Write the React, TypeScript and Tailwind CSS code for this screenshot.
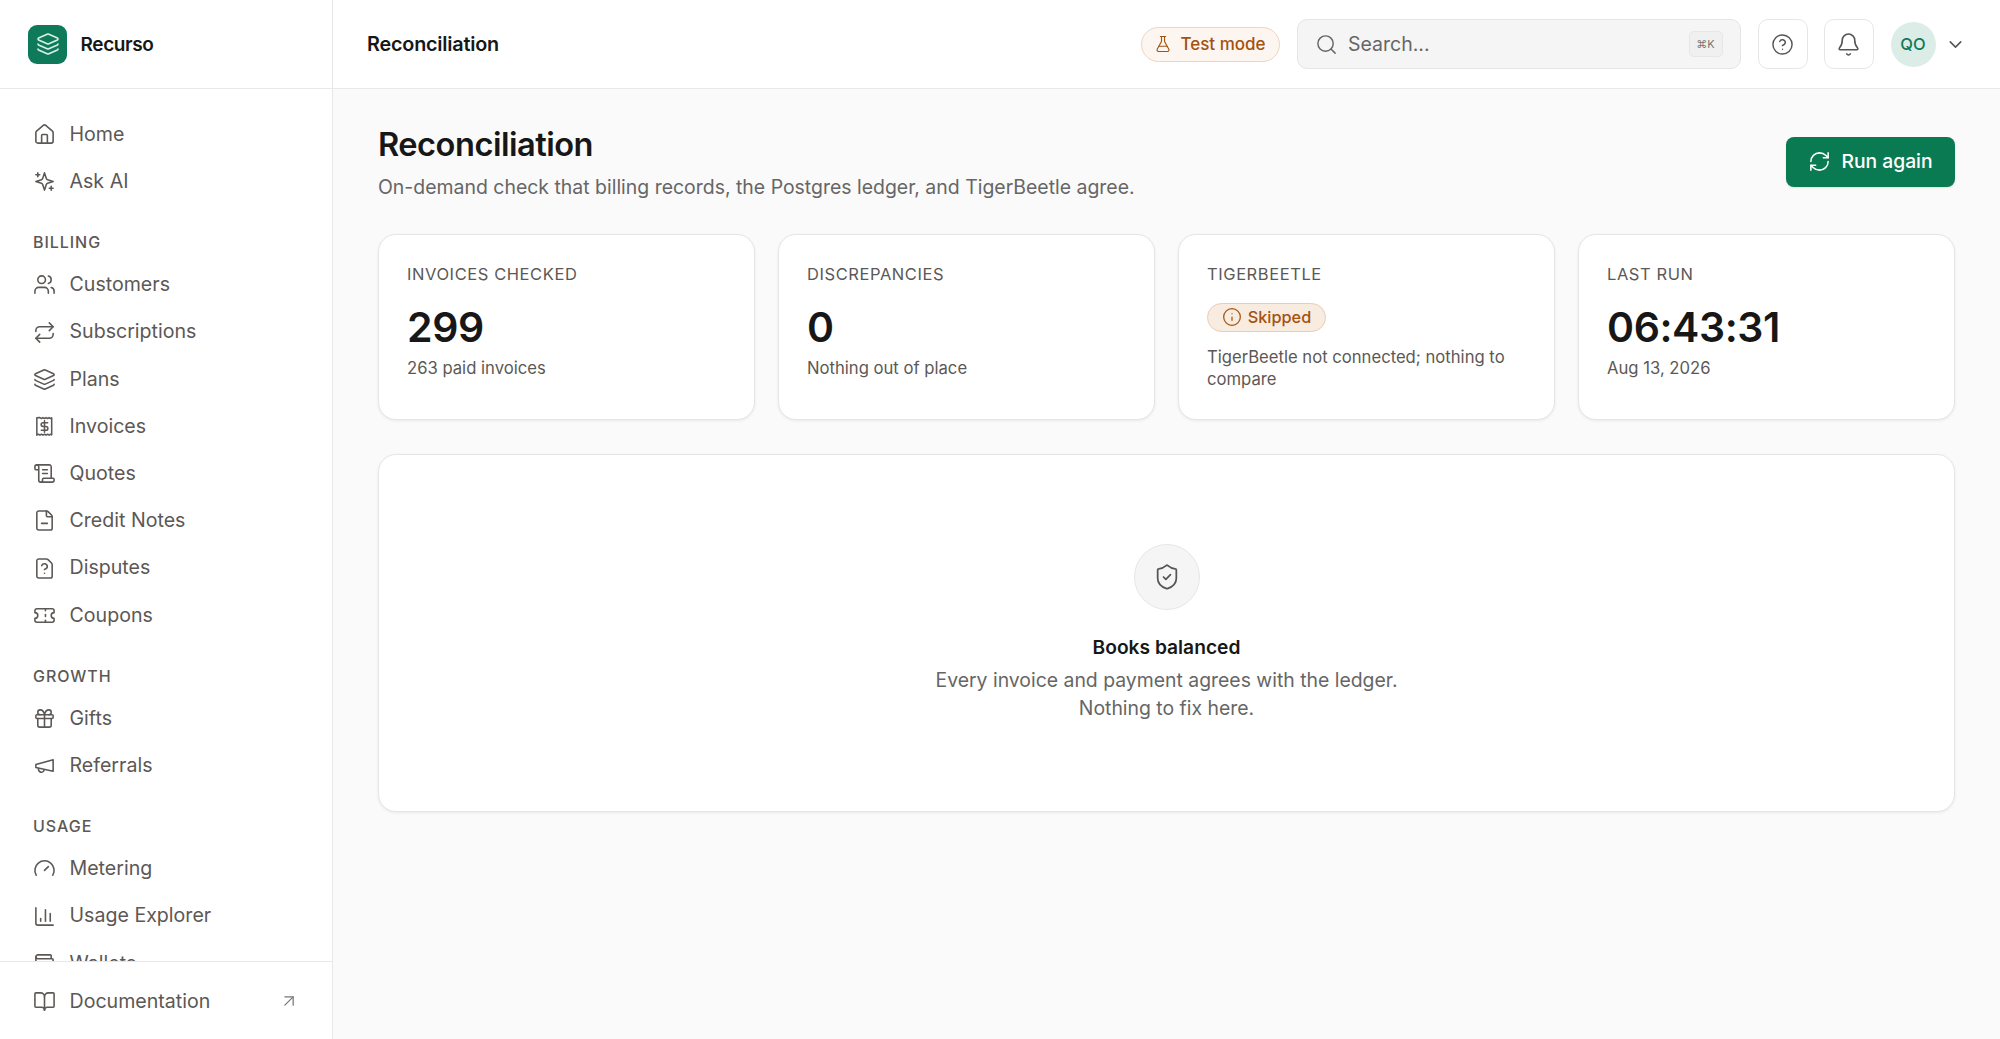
import React from "react";
import {
  Layers, House, Users, Repeat, ScrollText, FileMinus, FileQuestion, Ticket, Gift, Gauge, ChartColumn, Wallet, BookOpen, ArrowUpRight, FlaskConical, Search, CircleHelp, Bell, ChevronDown, RefreshCw, Info, ShieldCheck,
} from "lucide-react";

type IconProps = { className?: string; strokeWidth?: number };

const svgProps = {
  viewBox: "0 0 24 24",
  fill: "none",
  stroke: "currentColor",
  strokeLinecap: "round" as const,
  strokeLinejoin: "round" as const,
};

const InvoiceIcon = (p: IconProps) => (
  <svg {...svgProps} strokeWidth={1.6} className={p.className}>
    <path d="M4 3v18l1.6-1 1.6 1 1.6-1 1.6 1 1.6-1 1.6 1 1.6-1 1.6 1 1.6-1 1.1.7V3l-1.1.7-1.6-1-1.6 1-1.6-1-1.6 1-1.6-1-1.6 1-1.6-1z" />
    <path d="M15.3 8H10.5a2 2 0 0 0 0 4h3a2 2 0 0 1 0 4H8.7M12 6v12" />
  </svg>
);
const SparklesIcon = (p: IconProps) => (
  <svg {...svgProps} strokeWidth={p.strokeWidth} className={p.className}>
    <path d="m12 3-1.912 5.813a2 2 0 0 1-1.275 1.275L3 12l5.813 1.912a2 2 0 0 1 1.275 1.275L12 21l1.912-5.813a2 2 0 0 1 1.275-1.275L21 12l-5.813-1.912a2 2 0 0 1-1.275-1.275L12 3Z" />
    <path d="M5 3v4M19 17v4M3 5h4M17 19h4" />
  </svg>
);
const MegaphoneIcon = (p: IconProps) => (
  <svg {...svgProps} strokeWidth={p.strokeWidth} className={p.className}>
    <path d="m3 11 18-5v12L3 14v-3z" />
    <path d="M11.6 16.8a3 3 0 1 1-5.8-1.6" />
  </svg>
);

type Item = { label: string; icon: React.ComponentType<IconProps> };
const groups: { title?: string; items: Item[] }[] = [
  { items: [{ label: "Home", icon: House }, { label: "Ask AI", icon: SparklesIcon }] },
  {
    title: "BILLING",
    items: [
      { label: "Customers", icon: Users },
      { label: "Subscriptions", icon: Repeat },
      { label: "Plans", icon: Layers },
      { label: "Invoices", icon: InvoiceIcon },
      { label: "Quotes", icon: ScrollText },
      { label: "Credit Notes", icon: FileMinus },
      { label: "Disputes", icon: FileQuestion },
      { label: "Coupons", icon: Ticket },
    ],
  },
  { title: "GROWTH", items: [{ label: "Gifts", icon: Gift }, { label: "Referrals", icon: MegaphoneIcon }] },
  {
    title: "USAGE",
    items: [
      { label: "Metering", icon: Gauge },
      { label: "Usage Explorer", icon: ChartColumn },
      { label: "Wallets", icon: Wallet },
    ],
  },
];

function NavRow({ item }: { item: Item }) {
  const I = item.icon;
  return (
    <div className="flex h-[47.2px] shrink-0 items-center gap-[13.5px] pl-[33px] text-[19.6px] text-[#5c5855]">
      <I className="h-[23px] w-[23px] shrink-0" strokeWidth={1.65} />
      <span>{item.label}</span>
    </div>
  );
}

function Stat({ label, value, sub }: { label: string; value: string; sub: string }) {
  return (
    <div className="h-[186px] rounded-[18px] border border-[#e6e6e6] bg-white px-[28px] pt-[28px] shadow-[0_1px_3px_rgba(0,0,0,0.07)]">
      <div className="text-[16.5px] leading-[22px] tracking-[0.035em] text-[#5c5855]">{label}</div>
      <div className="mt-[15px] text-[41px] leading-[54px] font-semibold tracking-[-0.01em] text-[#171717]">{value}</div>
      <div className="mt-[2.5px] text-[16.65px] leading-[24px] text-[#5c5855]">{sub}</div>
    </div>
  );
}

export default function App() {
  return (
    <div className="flex h-[1039px] w-[2000px] overflow-hidden bg-[#fafafa] font-['Inter',sans-serif] text-[#171717]">
      <aside className="flex h-full w-[333px] shrink-0 flex-col border-r border-[#e8e8e8] bg-white">
        <div className="flex h-[89px] shrink-0 items-center gap-[13.5px] border-b border-[#e8e8e8] pl-[28px]">
          <div className="flex h-[39px] w-[39px] items-center justify-center rounded-[9px] bg-[#0f7a59]">
            <Layers className="h-[24px] w-[24px] text-[#d7f0e6]" strokeWidth={1.6} />
          </div>
          <span className="pt-[2px] text-[19px] font-semibold tracking-[-0.02em] text-[#171717]">Recurso</span>
        </div>
        <nav className="min-h-0 flex-1 overflow-hidden pt-[22px]">
          {groups.map((g, i) => (
            <div key={i}>
              {g.title && (
                <div className="mt-[25px] mb-[7px] pl-[33px] text-[16px] leading-[24px] font-medium tracking-[0.06em] text-[#5c5855]">{g.title}</div>
              )}
              {g.items.map((it) => (
                <NavRow key={it.label} item={it} />
              ))}
            </div>
          ))}
        </nav>
        <div className="flex h-[78px] shrink-0 items-center gap-[13.5px] border-t border-[#e8e8e8] pt-[1px] pr-[33px] pl-[33px] text-[19.6px] text-[#5c5855]">
          <BookOpen className="h-[23px] w-[23px]" strokeWidth={1.65} />
          <span className="flex-1 pt-[1px]">Documentation</span>
          <ArrowUpRight className="h-[20px] w-[20px] text-[#777]" strokeWidth={1.5} />
        </div>
      </aside>
      <div className="flex min-w-0 flex-1 flex-col">
        <header className="flex h-[89px] shrink-0 items-center border-b border-[#e8e8e8] bg-white pr-[34.5px] pl-[34px]">
          <div className="flex-1 pt-[2px] text-[19.8px] font-semibold tracking-[-0.01em] text-[#171717]">Reconciliation</div>
          <div className="flex h-[35px] w-[139px] items-center justify-center gap-[8px] rounded-full border border-[#eed5c0] bg-[#fdf6f0] text-[17px] font-medium text-[#a3520f]">
            <FlaskConical className="h-[18px] w-[18px]" strokeWidth={1.5} />
            <span className="pt-[2px]">Test mode</span>
          </div>
          <div className="ml-[17px] flex h-[50px] w-[444px] items-center rounded-[10px] border border-[#e6e6e6] bg-[#f5f5f5] pr-[17px] pl-[17px] text-[19.5px] text-[#666]">
            <Search className="h-[23px] w-[23px]" strokeWidth={1.5} />
            <span className="ml-[10.5px] flex-1 pt-[2px]">Search...</span>
            <span className="flex h-[26px] w-[34px] items-center justify-center rounded-[5px] border border-[#e6e6e6] bg-[#f0f0f0] text-[11px] text-[#777]">⌘K</span>
          </div>
          <button className="ml-[17px] flex h-[50px] w-[50px] items-center justify-center rounded-[10px] border border-[#e6e6e6] bg-white text-[#555]">
            <CircleHelp className="h-[23px] w-[23px]" strokeWidth={1.5} />
          </button>
          <button className="ml-[16px] flex h-[50px] w-[50px] items-center justify-center rounded-[10px] border border-[#e6e6e6] bg-white text-[#555]">
            <Bell className="h-[25px] w-[25px]" strokeWidth={1.5} />
          </button>
          <div className="ml-[17px] flex h-[45px] w-[45px] items-center justify-center rounded-full bg-[#dcece6] text-[16.5px] font-medium text-[#0f7a59]">QO</div>
          <ChevronDown className="ml-[9px] h-[21px] w-[21px] text-[#555]" strokeWidth={1.75} />
        </header>
        <main className="min-h-0 flex-1 px-[45px] pt-[34px]">
          <div className="flex items-start justify-between">
            <div>
              <h1 className="text-[32.6px] leading-[43px] font-semibold tracking-[-0.015em] text-[#171717]">Reconciliation</h1>
              <p className="mt-[6.5px] text-[19.44px] leading-[28px] text-[#666]">On-demand check that billing records, the Postgres ledger, and TigerBeetle agree.</p>
            </div>
            <button className="mt-[13.5px] flex h-[50px] w-[169px] items-center justify-center gap-[10px] rounded-[8px] bg-[#0a7a52] text-[19.3px] font-medium text-white shadow-[0_1px_2px_rgba(0,0,0,0.1)]">
              <RefreshCw className="h-[23px] w-[23px]" strokeWidth={1.6} />
              Run again
            </button>
          </div>
          <div className="mt-[33px] grid grid-cols-4 gap-[23px]">
            <Stat label="INVOICES CHECKED" value="299" sub="263 paid invoices" />
            <Stat label="DISCREPANCIES" value="0" sub="Nothing out of place" />
            <div className="h-[186px] rounded-[18px] border border-[#e6e6e6] bg-white px-[28px] pt-[28px] shadow-[0_1px_3px_rgba(0,0,0,0.07)]">
              <div className="text-[16.5px] leading-[22px] tracking-[0.035em] text-[#5c5855]">TIGERBEETLE</div>
              <div className="mt-[18px] flex h-[29px] w-[119px] items-center justify-center gap-[6px] rounded-full border border-[#e8cdb6] bg-[#f8ebdf] text-[16.3px] font-medium text-[#a3520f]">
                <Info className="h-[20px] w-[20px]" strokeWidth={1.5} />
                Skipped
              </div>
              <div className="mt-[14px] text-[16.65px] leading-[22px] text-[#5c5855]">TigerBeetle not connected; nothing to compare</div>
            </div>
            <Stat label="LAST RUN" value="06:43:31" sub="Aug 13, 2026" />
          </div>
          <div className="mt-[34px] flex h-[358px] flex-col items-center rounded-[18px] border border-[#e6e6e6] bg-white pt-[89px] shadow-[0_1px_3px_rgba(0,0,0,0.07)]">
            <div className="flex h-[66px] w-[66px] items-center justify-center rounded-full border border-[#e6e6e6] bg-[#f5f5f5] text-[#555]">
              <ShieldCheck className="h-[28px] w-[28px]" strokeWidth={1.5} />
            </div>
            <div className="mt-[23px] text-[19.2px] leading-[28px] font-semibold text-[#171717]">Books balanced</div>
            <div className="mt-[5px] text-center text-[19.4px] leading-[28px] text-[#666]">
              Every invoice and payment agrees with the ledger.
              <br />
              Nothing to fix here.
            </div>
          </div>
        </main>
      </div>
    </div>
  );
}
